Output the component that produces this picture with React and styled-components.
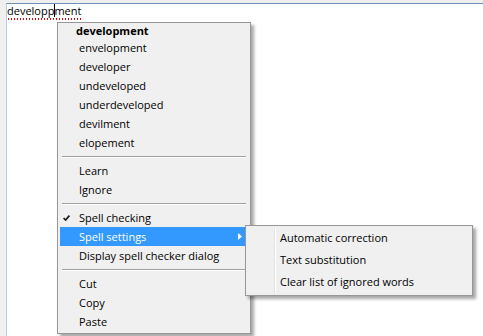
import React from "react";
import styled, { createGlobalStyle } from "styled-components";

const GlobalStyle = createGlobalStyle`
	html, body {
		margin: 0;
		padding: 0;
		background: #f0f0f0;
		overflow: hidden;
	}
	body {
		font-family: "Open Sans", "Liberation Sans", sans-serif;
		font-size: 11px;
		color: #000;
	}
`;

const suggestions = [
	"envelopment",
	"developer",
	"undeveloped",
	"underdeveloped",
	"devilment",
	"elopement",
];

const subItems = ["Automatic correction", "Text substitution", "Clear list of ignored words"];

const App = () => {
	return (
		<>
			<GlobalStyle />
			<Page>
				<TextBox>
					<Line>
						<Misspelled>
							developp
							<Caret />
							ment
						</Misspelled>
					</Line>

					<Menu>
						<Header>development</Header>
						{suggestions.map((s) => (
							<Item key={s}>{s}</Item>
						))}
						<Separator />
						<Item>Learn</Item>
						<Item>Ignore</Item>
						<Separator />
						<Item>
							<Check viewBox="0 0 7 6">
								<path d="M0.6 3 L2.6 5 L6.4 0.6" fill="none" stroke="#1a1a1a" strokeWidth="1.7" />
							</Check>
							Spell checking
						</Item>
						<Item $active>
							Spell settings
							<Arrow viewBox="0 0 4 7">
								<path d="M0 0 L4 3.5 L0 7 Z" fill="#fff" />
							</Arrow>
						</Item>
						<Item>Display spell checker dialog</Item>
						<Separator />
						<Item>Cut</Item>
						<Item>Copy</Item>
						<Item>Paste</Item>
					</Menu>

					<SubMenu>
						<Gutter />
						{subItems.map((s) => (
							<SubItem key={s}>{s}</SubItem>
						))}
					</SubMenu>
				</TextBox>
			</Page>
		</>
	);
};

const Page = styled.div`
	width: 483px;
	height: 336px;
	padding: 3px 0 0 6px;
	box-sizing: border-box;
`;

const TextBox = styled.div`
	position: relative;
	height: 100%;
	background: #fff;
	border-top: 1px solid #6f8fb3;
	border-left: 1px solid #b5cfe7;
`;

const Line = styled.div`
	height: 15px;
	line-height: 14px;
`;

const Misspelled = styled.span`
	position: relative;
	display: inline-block;
	padding-bottom: 2px;
	background-image: radial-gradient(circle, #e00 0.9px, transparent 1px);
	background-size: 3px 2px;
	background-repeat: repeat-x;
	background-position: 0 100%;
`;

const Caret = styled.span`
	display: inline-block;
	width: 1px;
	height: 13px;
	margin: 0 -0.5px;
	background: #000;
	vertical-align: -2px;
`;

const Menu = styled.div`
	position: absolute;
	left: 50px;
	top: 18px;
	width: 186px;
	padding: 1px 4px 2px 2px;
	background: #f0f0f0;
	border: 1px solid #979797;
	box-shadow: 3px 3px 3px rgba(0, 0, 0, 0.35);
	display: flex;
	flex-direction: column;
`;

const Header = styled.div`
	height: 14px;
	line-height: 14px;
	padding-left: 16px;
	font-weight: 700;
`;

const Item = styled.div`
	position: relative;
	height: 19px;
	line-height: 19px;
	padding-left: 19px;
	background: ${(p) => (p.$active ? "#3399ff" : "transparent")};
	color: ${(p) => (p.$active ? "#fff" : "#000")};
`;

const Separator = styled.div`
	height: 1px;
	margin: 4px 0 3px 2px;
	background: #a0a0a0;
	border-bottom: 1px solid #fff;
`;

const Check = styled.svg`
	position: absolute;
	left: 3px;
	top: 7px;
	width: 7px;
	height: 6px;
`;

const Arrow = styled.svg`
	position: absolute;
	right: 4px;
	top: 6px;
	width: 4px;
	height: 7px;
`;

const SubMenu = styled.div`
	position: absolute;
	left: 238px;
	top: 221px;
	width: 226px;
	padding: 1px 0 2px;
	background: #f0f0f0;
	border: 1px solid #979797;
	box-shadow: 3px 3px 3px rgba(0, 0, 0, 0.35);
	display: flex;
	flex-direction: column;
`;

const Gutter = styled.div`
	position: absolute;
	left: 28px;
	top: 2px;
	bottom: 2px;
	width: 1px;
	background: #e2e3e3;
	border-right: 1px solid #fff;
`;

const SubItem = styled.div`
	height: 22px;
	line-height: 22px;
	padding-left: 34px;
`;

export default App;
